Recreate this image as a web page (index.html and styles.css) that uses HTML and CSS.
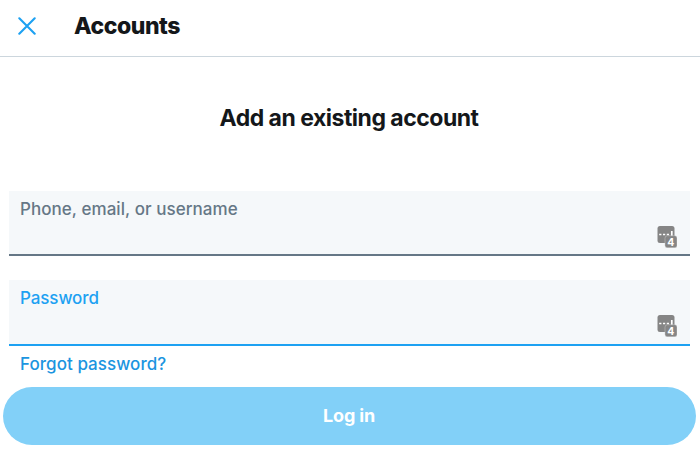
FILE: index.html
```html
<!DOCTYPE html>
<html lang="en">
  <head>
    <meta charset="UTF-8" />
    <meta name="viewport" content="width=device-width, initial-scale=1.0" />
    <title>Accounts</title>
    <link rel="stylesheet" href="styles.css">
  </head>
  <body>
    <header class="header">
      <button class="close" type="button" aria-label="Close">
        <svg viewBox="0 0 18 18" width="18" height="18">
          <path d="M1.3 1.3 16.7 16.7M16.7 1.3 1.3 16.7" />
        </svg>
      </button>
      <h1>Accounts</h1>
    </header>

    <main>
      <h2>Add an existing account</h2>

      <form class="login-form">
        <div class="field">
          <label for="username">Phone, email, or username</label>
          <div class="input-row">
            <input id="username" type="text" />
            <svg class="manager-icon" viewBox="0 0 20 22" width="20" height="22">
              <rect x="0.5" y="0" width="17" height="17" rx="2.5" />
              <path class="dots" d="M2.2 8.5h2.2M6 8.5h2.2M9.8 8.5h2.2M14.8 5v5" />
              <rect class="badge" x="8" y="9.7" width="12" height="12" rx="2.5" />
              <text x="13.7" y="19.6">4</text>
            </svg>
          </div>
        </div>

        <div class="field active">
          <label for="password">Password</label>
          <div class="input-row">
            <input id="password" type="password" />
            <svg class="manager-icon" viewBox="0 0 20 22" width="20" height="22">
              <rect x="0.5" y="0" width="17" height="17" rx="2.5" />
              <path class="dots" d="M2.2 8.5h2.2M6 8.5h2.2M9.8 8.5h2.2M14.8 5v5" />
              <rect class="badge" x="8" y="9.7" width="12" height="12" rx="2.5" />
              <text x="13.7" y="19.6">4</text>
            </svg>
          </div>
        </div>

        <a class="forgot" href="#">Forgot password?</a>
        <button class="btn-login" type="submit">Log in</button>
      </form>
    </main>
  </body>
</html>
```

FILE: styles.css
```css
* {
  margin: 0;
  padding: 0;
  box-sizing: border-box;
}
body {
  font-family: Inter, "Liberation Sans", sans-serif;
  background: #fff;
  color: #14171a;
}
.header {
  display: flex;
  align-items: center;
  height: 57px;
  padding: 0 18px 4px;
  border-bottom: 1px solid #ccd6dd;
}
.close {
  display: flex;
  margin-right: 38px;
  background: none;
  border: none;
  cursor: pointer;
}
.close svg {
  fill: none;
  stroke: #1da1f2;
  stroke-width: 2.1;
  stroke-linecap: round;
}
h1 {
  font-size: 23px;
  font-weight: 800;
  line-height: 28px;
  letter-spacing: -0.45px;
}
h2 {
  padding: 47px 2px 0 0;
  font-size: 23px;
  font-weight: 700;
  line-height: 28px;
  letter-spacing: -0.5px;
  text-align: center;
}
.login-form {
  display: flex;
  flex-direction: column;
  padding: 59px 4px 0 3px;
}
.field {
  height: 65px;
  margin: 0 6px 24px;
  padding: 7px 13px 0 11px;
  background: #f5f8fa;
  border-bottom: 2px solid #657786;
}
.field label {
  display: block;
  color: #657786;
  font-size: 17px;
  font-weight: 500;
  line-height: 22px;
  letter-spacing: 0.05px;
}
.field.active {
  height: 66px;
  margin-bottom: 7px;
  border-color: #1da1f2;
}
.field.active label {
  color: #1da1f2;
  letter-spacing: -0.1px;
}
.input-row {
  display: flex;
  align-items: flex-start;
  padding-top: 6px;
}
.input-row input {
  flex: 1;
  height: 22px;
  border: none;
  outline: none;
  background: transparent;
  font: inherit;
}
.manager-icon {
  fill: #858585;
}
.manager-icon .dots {
  fill: none;
  stroke: #fff;
  stroke-width: 1.7;
}
.manager-icon .badge {
  stroke: #c8c8c8;
  stroke-width: 0.5;
}
.manager-icon text {
  fill: #fff;
  font-size: 10.5px;
  font-weight: 700;
  text-anchor: middle;
}
.forgot {
  align-self: flex-start;
  margin: 0 0 12px 17px;
  color: #1b95e0;
  font-size: 17px;
  font-weight: 500;
  line-height: 22px;
  letter-spacing: 0.05px;
  text-decoration: none;
}
.btn-login {
  height: 58px;
  padding: 0 1px 2px 0;
  border: none;
  border-radius: 29px;
  background: #82d0f8;
  color: #fff;
  font-family: inherit;
  font-size: 18px;
  font-weight: 700;
  letter-spacing: -0.15px;
  cursor: pointer;
}
```
